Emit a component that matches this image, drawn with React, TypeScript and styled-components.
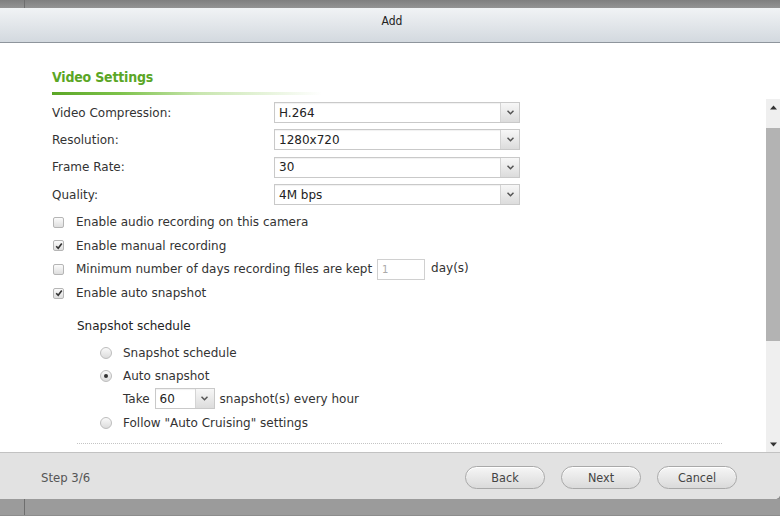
import styled, { createGlobalStyle } from "styled-components";

const GlobalStyle = createGlobalStyle`
  html, body {
    margin: 0;
    padding: 0;
    background: #8d8d8d;
  }
  body {
    font-family: "DejaVu Sans", Verdana, sans-serif;
    font-size: 12px;
    color: #333;
  }
`;

const Page = styled.div`
  width: 780px;
  height: 516px;
  display: flex;
  flex-direction: column;
  overflow: hidden;
`;

const Backdrop = styled.div<{ $h: number; $bg: string }>`
  height: ${(p) => p.$h}px;
  background: ${(p) => p.$bg};
  position: relative;
  flex: none;
  &::before {
    content: "";
    position: absolute;
    left: 24px;
    top: 0;
    bottom: 0;
    width: 1px;
    background: #6e6e6e;
  }
`;

const Dialog = styled.div`
  flex: none;
  display: flex;
  flex-direction: column;
  background: #fff;
  border-bottom-right-radius: 5px;
  overflow: hidden;
`;

const Header = styled.div`
  height: 35px;
  box-sizing: border-box;
  padding: 6px 0 0 4px;
  border-bottom: 1px solid #8e959c;
  background: linear-gradient(#f1f3f5, #d3d9df);
  display: flex;
  align-items: flex-start;
  justify-content: center;
  font-family: "DejaVu Sans Condensed", "DejaVu Sans", sans-serif;
  font-stretch: condensed;
  font-size: 12px;
  color: #222;
`;

const Body = styled.div`
  height: 409px;
  display: flex;
  flex-direction: column;
`;

const TitleBlock = styled.div`
  height: 56px;
  padding-left: 52px;
  display: flex;
  flex-direction: column;
  justify-content: flex-end;
  box-sizing: border-box;
  padding-bottom: 4px;
`;

const Title = styled.div`
  font-family: "DejaVu Sans Condensed", "DejaVu Sans", sans-serif;
  font-stretch: condensed;
  font-weight: bold;
  font-size: 14px;
  letter-spacing: -0.2px;
  color: #5ba626;
  margin-bottom: 7px;
`;

const Underline = styled.div`
  width: 270px;
  height: 3px;
  background: linear-gradient(to right, #5ba626 0%, #7dc24a 25%, #c9e6b0 55%, rgba(255, 255, 255, 0) 100%);
`;

const ScrollArea = styled.div`
  flex: 1;
  display: flex;
  min-height: 0;
`;

const Content = styled.div`
  flex: 1;
  padding-left: 52px;
  overflow: hidden;
`;

const FieldRow = styled.div`
  display: flex;
  align-items: center;
  height: 27.3px;
`;

const Label = styled.div`
  width: 222px;
  color: #333;
`;

const SelectBox = styled.div<{ $w: number }>`
  width: ${(p) => p.$w}px;
  height: 21px;
  box-sizing: border-box;
  border: 1px solid #c9c9c9;
  background: #fff;
  display: flex;
  align-items: stretch;
  box-shadow: inset 0 1px 1px rgba(0, 0, 0, 0.06);
`;

const SelectValue = styled.div`
  flex: 1;
  padding-left: 4px;
  display: flex;
  align-items: center;
  color: #222;
`;

const SelectArrow = styled.div`
  width: 18px;
  border-left: 1px solid #d4d4d4;
  background: linear-gradient(#f7f7f7, #dcdcdc);
  display: flex;
  align-items: center;
  justify-content: center;
`;

const Chevron = () => (
  <svg width="7" height="5" viewBox="0 0 7 5">
    <path d="M0.5 0.8 L3.5 3.8 L6.5 0.8" fill="none" stroke="#555" strokeWidth="1.5" />
  </svg>
);

const Select = ({ value, width }: { value: string; width: number }) => (
  <SelectBox $w={width}>
    <SelectValue>{value}</SelectValue>
    <SelectArrow>
      <Chevron />
    </SelectArrow>
  </SelectBox>
);

const CheckList = styled.div`
  margin-top: 2px;
`;

const CheckRow = styled.div`
  display: flex;
  align-items: center;
  height: 23.7px;
  color: #333;
`;

const Box = styled.span`
  width: 11px;
  height: 11px;
  margin-left: 1px;
  margin-right: 12px;
  box-sizing: border-box;
  border: 1px solid #b5b5b5;
  border-radius: 2px;
  background: linear-gradient(#fbfbfb, #dedede);
  display: inline-flex;
  align-items: center;
  justify-content: center;
  flex: none;
`;

const Tick = () => (
  <svg width="8" height="8" viewBox="0 0 8 8">
    <path d="M1.2 4.2 L3.2 6.2 L6.8 1.4" fill="none" stroke="#333" strokeWidth="1.6" />
  </svg>
);

const Checkbox = ({ checked, children }: { checked?: boolean; children: React.ReactNode }) => (
  <CheckRow>
    <Box>{checked && <Tick />}</Box>
    {children}
  </CheckRow>
);

const DaysInput = styled.div`
  width: 48px;
  height: 21px;
  box-sizing: border-box;
  border: 1px solid #d0d0d0;
  margin-left: 5px;
  padding-left: 4px;
  font-size: 10px;
  color: #aaa;
  display: flex;
  align-items: center;
`;

const Unit = styled.span`
  margin-left: 6px;
  margin-top: -2px;
`;

const SubTitle = styled.div`
  margin-left: 25px;
  margin-top: 9px;
  height: 24px;
  display: flex;
  align-items: center;
  color: #222;
`;

const RadioGroup = styled.div`
  padding-left: 48px;
  margin-top: 4px;
`;

const RadioRow = styled.div`
  display: flex;
  align-items: center;
  height: 23px;
  color: #333;
`;

const Dot = styled.span<{ $on?: boolean }>`
  width: 12px;
  height: 12px;
  box-sizing: border-box;
  border-radius: 50%;
  border: 1px solid #bdbdbd;
  background: linear-gradient(#fafafa, #dcdcdc);
  margin-right: 11px;
  display: inline-flex;
  align-items: center;
  justify-content: center;
  flex: none;
  &::after {
    content: "";
    width: 4px;
    height: 4px;
    border-radius: 50%;
    background: ${(p) => (p.$on ? "#333" : "transparent")};
  }
`;

const TakeRow = styled.div`
  display: flex;
  align-items: center;
  height: 22px;
  padding-left: 23px;
  gap: 5px;
  color: #333;
  margin-bottom: 2px;
`;

const Dotted = styled.div`
  margin-left: 25px;
  margin-top: 8px;
  width: 645px;
  border-top: 1px dotted #c4c4c4;
`;

const Scrollbar = styled.div`
  width: 14px;
  background: #efefef;
  display: flex;
  flex-direction: column;
  align-items: stretch;
`;

const ScrollBtn = styled.div`
  height: 16px;
  display: flex;
  align-items: center;
  justify-content: center;
`;

const Track = styled.div`
  flex: 1;
  padding: 13px 0 95px;
  display: flex;
`;

const Thumb = styled.div`
  flex: 1;
  background: #b3b3b3;
`;

const Triangle = ({ up }: { up?: boolean }) => (
  <svg width="7" height="5" viewBox="0 0 7 5">
    <path d={up ? "M0 4.5 L3.5 0.5 L7 4.5 Z" : "M0 0.5 L3.5 4.5 L7 0.5 Z"} fill="#333" />
  </svg>
);

const Footer = styled.div`
  height: 47px;
  box-sizing: border-box;
  padding: 3px 43px 0 41px;
  border-top: 1px solid #c2c2c2;
  background: #e2e2e2;
  display: flex;
  align-items: center;
  font-family: "DejaVu Sans Condensed", "DejaVu Sans", sans-serif;
  font-stretch: condensed;
`;

const Step = styled.div`
  flex: 1;
  font-size: 13px;
  color: #555;
`;

const Buttons = styled.div`
  display: flex;
  gap: 16px;
`;

const Button = styled.button`
  width: 80px;
  height: 23px;
  border-radius: 12px;
  border: 1px solid #a9a9a9;
  background: linear-gradient(#f6f6f6, #dadada);
  box-shadow: inset 0 1px 0 #fff;
  font-family: inherit;
  font-stretch: condensed;
  font-size: 12.5px;
  color: #444;
  padding: 0;
`;

export default function App() {
  return (
    <Page>
      <GlobalStyle />
      <Backdrop $h={8} $bg="linear-gradient(#7f7f7f, #939393)" />
      <Dialog>
        <Header>Add</Header>
        <Body>
          <TitleBlock>
            <Title>Video Settings</Title>
            <Underline />
          </TitleBlock>
          <ScrollArea>
            <Content>
              <FieldRow>
                <Label>Video Compression:</Label>
                <Select value="H.264" width={246} />
              </FieldRow>
              <FieldRow>
                <Label>Resolution:</Label>
                <Select value="1280x720" width={246} />
              </FieldRow>
              <FieldRow>
                <Label>Frame Rate:</Label>
                <Select value="30" width={246} />
              </FieldRow>
              <FieldRow>
                <Label>Quality:</Label>
                <Select value="4M bps" width={246} />
              </FieldRow>
              <CheckList>
                <Checkbox>Enable audio recording on this camera</Checkbox>
                <Checkbox checked>Enable manual recording</Checkbox>
                <Checkbox>
                  Minimum number of days recording files are kept
                  <DaysInput>1</DaysInput>
                  <Unit>day(s)</Unit>
                </Checkbox>
                <Checkbox checked>Enable auto snapshot</Checkbox>
              </CheckList>
              <SubTitle>Snapshot schedule</SubTitle>
              <RadioGroup>
                <RadioRow>
                  <Dot />
                  Snapshot schedule
                </RadioRow>
                <RadioRow>
                  <Dot $on />
                  Auto snapshot
                </RadioRow>
                <TakeRow>
                  Take
                  <Select value="60" width={60} />
                  snapshot(s) every hour
                </TakeRow>
                <RadioRow>
                  <Dot />
                  Follow "Auto Cruising" settings
                </RadioRow>
              </RadioGroup>
              <Dotted />
            </Content>
            <Scrollbar>
              <ScrollBtn>
                <Triangle up />
              </ScrollBtn>
              <Track>
                <Thumb />
              </Track>
              <ScrollBtn>
                <Triangle />
              </ScrollBtn>
            </Scrollbar>
          </ScrollArea>
        </Body>
        <Footer>
          <Step>Step 3/6</Step>
          <Buttons>
            <Button>Back</Button>
            <Button>Next</Button>
            <Button>Cancel</Button>
          </Buttons>
        </Footer>
      </Dialog>
      <Backdrop $h={16} $bg="#9b9b9b" />
    </Page>
  );
}
